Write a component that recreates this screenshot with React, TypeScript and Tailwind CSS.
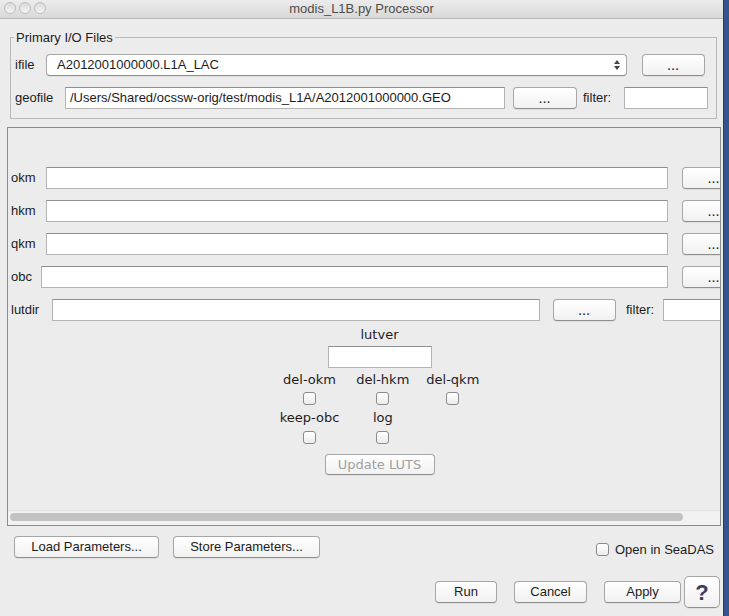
import React from "react";

function Btn({
  children,
  className = "",
  disabled = false,
}: {
  children?: React.ReactNode;
  className?: string;
  disabled?: boolean;
}) {
  return (
    <div
      className={`flex shrink-0 items-center justify-center rounded-[4px] border border-[#a6a6a6] border-b-[#8e8e8e] bg-linear-to-b from-white to-[#f1f1f1] shadow-[0_1px_0_rgba(0,0,0,0.06)] ${
        disabled ? "text-[#a0a0a0]" : "text-[#1c1c1c]"
      } ${className}`}
    >
      {children}
    </div>
  );
}

function Dots({ className = "" }: { className?: string }) {
  return (
    <Btn className={`h-[22px] ${className}`}>
      <span className="pt-[2px] text-[11px] font-bold tracking-[1px] text-[#333]">...</span>
    </Btn>
  );
}

function Field({ className = "" }: { className?: string }) {
  return (
    <div
      className={`h-[22px] shrink-0 border border-[#b3b3b3] border-t-[#8f8f8f] bg-white ${className}`}
    />
  );
}

function Check() {
  return (
    <div className="h-[13px] w-[13px] rounded-[3px] border border-[#8b8b8b] bg-linear-to-b from-white to-[#ececec]" />
  );
}

function FileRow({
  label,
  labelW,
  fieldW,
}: {
  label: string;
  labelW: string;
  fieldW: string;
}) {
  return (
    <div className="flex h-[22px] items-center">
      <div className={`${labelW} shrink-0 text-[13px]`}>{label}</div>
      <Field className={fieldW} />
      <Dots className="ml-[14px] w-[64px]" />
    </div>
  );
}

export default function App() {
  return (
    <div className="flex h-[616px] w-[729px] overflow-hidden bg-[#34558c] font-['Liberation_Sans',Arial,sans-serif] text-[#1c1c1c]">
      <div className="flex w-[724px] shrink-0 flex-col border-r border-[#3a3a3a] bg-[#ececec]">
        {/* title bar */}
        <div className="relative flex h-[19px] shrink-0 items-center justify-center border-b border-[#b5b5b5] bg-linear-to-b from-[#ececec] to-[#d9d9d9]">
          <div className="absolute left-[4px] top-[2px] flex gap-[3px]">
            <div className="h-[12px] w-[12px] rounded-full border border-[#bdbdbd] bg-linear-to-b from-[#dadada] to-[#f4f4f4]" />
            <div className="h-[12px] w-[12px] rounded-full border border-[#bdbdbd] bg-linear-to-b from-[#dadada] to-[#f4f4f4]" />
            <div className="h-[12px] w-[12px] rounded-full border border-[#bdbdbd] bg-linear-to-b from-[#dadada] to-[#f4f4f4]" />
          </div>
          <span className="text-[13px] text-[#4d4d4d]">modis_L1B.py Processor</span>
        </div>

        {/* primary I/O files */}
        <fieldset className="ml-[10px] mt-[11px] w-[707px] border border-[#b9b9b9] pb-[9px]">
          <legend className="ml-[3px] px-[2px] text-[13px] leading-[15px]">Primary I/O Files</legend>
          <div className="flex flex-col gap-[11px] pl-[4px] pt-[9px]">
            <div className="flex h-[22px] items-center">
              <div className="w-[31px] shrink-0 text-[13px]">ifile</div>
              <div className="flex h-[22px] w-[581px] shrink-0 items-center justify-between rounded-[4px] border border-[#a6a6a6] border-b-[#8e8e8e] bg-white pl-[10px] pr-[6px] text-[13px] shadow-[0_1px_0_rgba(0,0,0,0.06)]">
                <span>A2012001000000.L1A_LAC</span>
                <svg width="6" height="10" viewBox="0 0 6 10">
                  <path d="M0 4 L3 0 L6 4 Z" fill="#444" />
                  <path d="M0 6 L3 10 L6 6 Z" fill="#444" />
                </svg>
              </div>
              <Dots className="ml-[15px] w-[63px]" />
            </div>
            <div className="flex h-[22px] items-center">
              <div className="w-[50px] shrink-0 text-[13px]">geofile</div>
              <div className="flex h-[22px] w-[440px] shrink-0 items-center border border-[#b3b3b3] border-t-[#8f8f8f] bg-white pl-[4px] text-[13px]">
                /Users/Shared/ocssw-orig/test/modis_L1A/A2012001000000.GEO
              </div>
              <Dots className="ml-[8px] w-[64px]" />
              <div className="ml-[6px] w-[41px] shrink-0 text-[13px]">filter:</div>
              <Field className="w-[84px]" />
            </div>
          </div>
        </fieldset>

        {/* scroll pane */}
        <div className="ml-[7px] mt-[8px] flex h-[399px] w-[714px] shrink-0 flex-col overflow-hidden border border-[#8c8c8c]">
          <div className="flex w-[740px] shrink-0 flex-col pl-[3px] pt-[39px]">
            <div className="flex flex-col gap-[11px]">
              <FileRow label="okm" labelW="w-[35px]" fieldW="w-[622px]" />
              <FileRow label="hkm" labelW="w-[35px]" fieldW="w-[622px]" />
              <FileRow label="qkm" labelW="w-[35px]" fieldW="w-[622px]" />
              <FileRow label="obc" labelW="w-[30px]" fieldW="w-[627px]" />
              <div className="flex h-[22px] items-center">
                <div className="w-[41px] shrink-0 text-[13px]">lutdir</div>
                <Field className="w-[488px]" />
                <Dots className="ml-[13px] w-[63px]" />
                <div className="ml-[10px] w-[37px] shrink-0 text-[13px]">filter:</div>
                <Field className="w-[80px]" />
              </div>
            </div>

            <div className="flex flex-col items-center font-['DejaVu_Sans',sans-serif] text-[13px]">
              <div className="mt-[6px] leading-[16px]">lutver</div>
              <Field className="mt-[3px] w-[104px]" />
              <div className="mt-[4px] grid grid-cols-[auto_auto_auto] justify-items-center gap-x-[17px] leading-[16px]">
                <div>del-okm</div>
                <div>del-hkm</div>
                <div>del-qkm</div>
                <div className="mt-[4px]"><Check /></div>
                <div className="mt-[4px]"><Check /></div>
                <div className="mt-[4px]"><Check /></div>
                <div className="mt-[5px]">keep-obc</div>
                <div className="mt-[5px]">log</div>
                <div />
                <div className="mt-[5px]"><Check /></div>
                <div className="mt-[5px]"><Check /></div>
                <div />
              </div>
              <Btn disabled className="mt-[10px] h-[21px] w-[110px]">
                <span className="text-[13px]">Update LUTS</span>
              </Btn>
            </div>
          </div>
          <div className="flex-1" />
          <div className="h-[15px] shrink-0 border-t border-[#e2e2e2] bg-[#f2f2f2] pl-[2px] pt-[2px]">
            <div className="h-[8px] w-[673px] rounded-full bg-[#c2c2c2]" />
          </div>
        </div>

        {/* parameter buttons */}
        <div className="mt-[10px] flex h-[22px] items-center">
          <Btn className="ml-[14px] h-[22px] w-[145px] text-[13px]">Load Parameters...</Btn>
          <Btn className="ml-[14px] h-[22px] w-[147px] text-[13px]">Store Parameters...</Btn>
          <div className="ml-auto mr-[9px] mt-[5px] flex items-center gap-[6px] text-[13px]">
            <Check />
            <span>Open in SeaDAS</span>
          </div>
        </div>

        {/* action buttons */}
        <div className="mt-[18px] flex h-[32px] items-center justify-end pr-[3px]">
          <Btn className="h-[22px] w-[62px] text-[13px]">Run</Btn>
          <Btn className="ml-[17px] h-[22px] w-[73px] text-[13px]">Cancel</Btn>
          <Btn className="ml-[17px] h-[22px] w-[77px] text-[13px]">Apply</Btn>
          <Btn className="ml-[3px] h-[32px] w-[36px] rounded-[5px]">
            <span className="text-[22px] font-bold text-[#34405e]">?</span>
          </Btn>
        </div>
      </div>
    </div>
  );
}
